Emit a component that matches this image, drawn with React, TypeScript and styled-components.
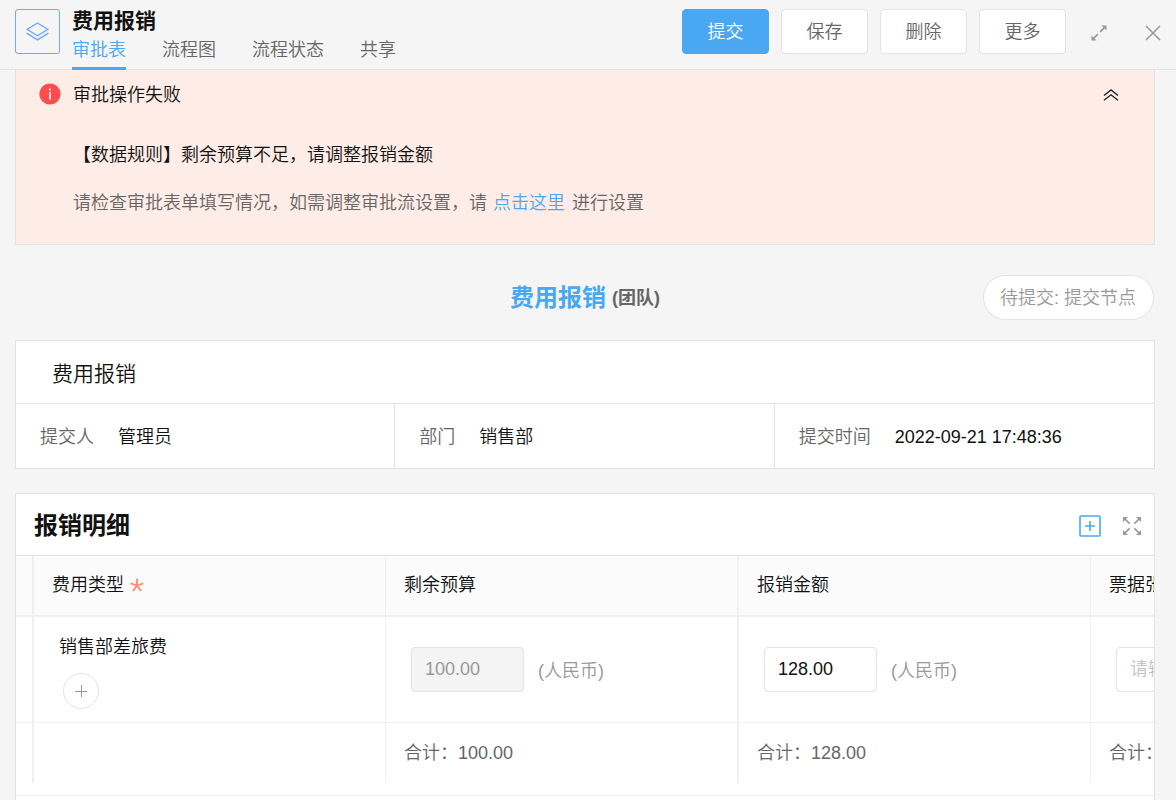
import React from "react";
import styled, { createGlobalStyle, css } from "styled-components";

const c = {
  blue: "#4aa8f2",
  bg: "#f5f5f5",
  line: "#e3e3e5",
  grid: "#f0f0f1",
  ink: "#111111",
  mid: "#666666",
  soft: "#999999",
};

const GlobalStyle = createGlobalStyle`
  *, *::before, *::after { box-sizing: border-box; }
  body {
    margin: 0;
    background: ${c.bg};
    color: ${c.ink};
    font-family: "Liberation Sans", "Noto Sans CJK SC", sans-serif;
    font-size: 18px;
    font-weight: 350;
    line-height: 24px;
  }
  h1, h2, h3, p, dl, dt, dd { margin: 0; font-size: inherit; font-weight: inherit; }
  button, input { font: inherit; color: inherit; }
  button { padding: 0; border: 0; background: none; cursor: pointer; }
  a { text-decoration: none; }
`;

const Page = styled.div`
  display: flex;
  flex-direction: column;
  height: 100vh;
`;

const Header = styled.header`
  display: flex;
  flex: none;
  height: 70px;
  padding: 9px 15px 0;
  border-bottom: 1px solid ${c.line};
`;

const AppBadge = styled.div`
  display: flex;
  align-items: center;
  justify-content: center;
  width: 45px;
  height: 45px;
  border: 1px solid #6fa8ff;
  border-radius: 3px;
  color: #6fa8ff;
`;

const Heading = styled.div`
  margin-left: 12px;
`;

const AppTitle = styled.h1`
  && { font-size: 21px; font-weight: 700; }
`;

const Tabs = styled.nav`
  display: flex;
  gap: 36px;
`;

const Tab = styled.a<{ $active?: boolean }>`
  height: 37px;
  padding-top: 5px;
  color: ${(p) => (p.$active ? c.blue : c.mid)};
  border-bottom: 3px solid ${(p) => (p.$active ? c.blue : "transparent")};
`;

const Actions = styled.div`
  display: flex;
  gap: 12px;
  margin-left: auto;
`;

const Button = styled.button<{ $primary?: boolean }>`
  width: 87px;
  height: 45px;
  border: 1px solid ${c.line};
  border-radius: 4px;
  background: #fff;
  color: ${c.mid};
  ${(p) =>
    p.$primary &&
    css`
      border-color: ${c.blue};
      background: ${c.blue};
      color: #fff;
    `}
`;

const HeaderTools = styled.div`
  display: flex;
  gap: 37px;
  height: 48px;
  margin-left: 24px;
  color: ${c.soft};
`;

const IconButton = styled.button`
  display: flex;
  align-items: center;
  color: inherit;
`;

const Main = styled.main`
  flex: 1;
  min-height: 0;
  padding: 0 21px 24px 15px;
  overflow-y: auto;
  scrollbar-width: none;
`;

const Alert = styled.section`
  display: grid;
  grid-template-columns: 22px 1fr auto;
  column-gap: 12px;
  padding: 12px 35px 29px 23px;
  border: 1px solid ${c.line};
  border-top: 0;
  background: #feece6;
`;

const AlertIcon = styled.span`
  display: flex;
  align-items: center;
  height: 24px;
`;

const AlertBody = styled.div`
  display: flex;
  flex-direction: column;
  gap: 24px;
  padding-top: 1px;
`;

const AlertTitle = styled.h2`
  padding-bottom: 12px;
`;

const AlertHint = styled.p`
  color: ${c.mid};
  a { margin: 0 2px 0 1px; color: ${c.blue}; }
`;

const Collapse = styled.button`
  display: flex;
  align-items: center;
  height: 26px;
`;

const TitleRow = styled.div`
  display: grid;
  grid-template-columns: 1fr auto 1fr;
  align-items: center;
  height: 45px;
  margin: 30px 0 20px;
`;

const FormTitle = styled.h2`
  && { grid-column: 2; font-size: 24px; font-weight: 700; }
  display: flex;
  align-items: center;
  gap: 6px;
  color: ${c.blue};
  small { font-size: 18px; color: ${c.mid}; }
`;

const Status = styled.span`
  justify-self: end;
  height: 45px;
  padding: 10px 17px 8px 16px;
  margin-right: 1px;
  border: 1px solid ${c.line};
  border-radius: 23px;
  background: #fff;
  color: ${c.soft};
`;

const Card = styled.section`
  margin-bottom: 24px;
  border: 1px solid ${c.line};
  background: #fff;
`;

const CardTitle = styled.h3`
  && { font-size: 21px; }
  padding: 21px 36px 17px;
  border-bottom: 1px solid ${c.line};
`;

const Facts = styled.dl`
  display: grid;
  grid-template-columns: repeat(3, 1fr);
`;

const Fact = styled.div`
  display: flex;
  gap: 24px;
  padding: 21px 24px 19px;
  border-right: 1px solid ${c.line};
  &:last-child { border-right: 0; }
  dt { color: ${c.mid}; }
`;

const DetailHead = styled.div`
  display: flex;
  align-items: center;
  gap: 21px;
  height: 62px;
  padding: 3px 12px 0 18px;
  border-bottom: 1px solid ${c.line};
  color: ${c.soft};
`;

const DetailTitle = styled.h3`
  && { flex: 1; font-size: 24px; font-weight: 700; }
  color: ${c.ink};
`;

const TableScroll = styled.div`
  overflow: hidden;
  padding-bottom: 12px;
  border-bottom: 1px solid ${c.grid};
`;

const Table = styled.table`
  width: 1428px;
  table-layout: fixed;
  border-collapse: separate;
  border-spacing: 0;
  th, td {
    padding: 0 18px;
    border-right: 1px solid ${c.grid};
    text-align: left;
    font-weight: inherit;
  }
  tr > :nth-child(1) { width: 18px; padding: 0; border-right-width: 2px; }
  tr > :nth-child(2), tr > :nth-child(4) { width: 352px; }
  tr > :nth-child(3) { width: 353px; border-right-width: 2px; }
  th { height: 61px; padding-bottom: 2px; border-bottom: 2px solid ${c.grid}; background: #fbfbfb; }
  tbody td { height: 106px; padding: 0 25px; border-bottom: 1px solid ${c.grid}; }
  tfoot td { height: 60px; color: ${c.mid}; }
`;

const ColumnLabel = styled.span`
  display: flex;
  align-items: center;
  gap: 6px;
`;

const TypeCell = styled.div`
  display: flex;
  flex-direction: column;
  gap: 14px;
  padding-top: 5px;
`;

const AddRound = styled.button`
  display: flex;
  align-items: center;
  justify-content: center;
  width: 36px;
  height: 36px;
  margin-left: 4px;
  border: 1px solid ${c.line};
  border-radius: 50%;
  color: ${c.soft};
`;

const Money = styled.label`
  display: flex;
  align-items: center;
  gap: 14px;
  color: ${c.soft};
`;

const Unit = styled.span`
  padding-top: 3px;
`;

const Field = styled.input`
  width: 113px;
  height: 45px;
  padding: 0 13px;
  border: 1px solid ${c.line};
  border-radius: 4px;
  background: #fff;
  color: ${c.ink};
  &:disabled { background: #f4f4f4; color: ${c.soft}; }
  &::placeholder { color: #c4c4c4; }
`;

const CardFoot = styled.div`
  height: 48px;
`;

const LayersIcon = () => (
  <svg width="23" height="19" viewBox="0 0 23 19" fill="none" stroke="currentColor" strokeWidth="1.4">
    <path d="M11.5 1 L22 7.4 L11.5 13.8 L1 7.4 Z" />
    <path d="M0.6 11.2 L11.5 17.9 L22.4 11.2" />
  </svg>
);

const ExpandIcon = () => (
  <svg width="18" height="18" viewBox="0 0 18 18" fill="none" stroke="currentColor" strokeWidth="1.7">
    <path d="M10.2 7.8 L15 3 M7.8 10.2 L3 15" />
    <path d="M11.5 1.5 H16.5 V6.5 Z M1.5 11.5 V16.5 H6.5 Z" fill="currentColor" stroke="none" />
  </svg>
);

const CloseIcon = () => (
  <svg width="16" height="16" viewBox="0 0 16 16" fill="none" stroke="currentColor" strokeWidth="1.5">
    <path d="M1 1 L15 15 M15 1 L1 15" />
  </svg>
);

const ErrorIcon = () => (
  <svg width="22" height="22" viewBox="0 0 22 22">
    <circle cx="11" cy="11" r="10.6" fill="#ff4d4f" />
    <path d="M11 9 V16.4" stroke="#fff" strokeWidth="1.6" />
    <circle cx="11" cy="6.5" r="1" fill="#fff" />
  </svg>
);

const CollapseIcon = () => (
  <svg width="16" height="12" viewBox="0 0 16 12" fill="none" stroke="#222" strokeWidth="1.4">
    <path d="M1 6.5 L8 1 L15 6.5 M1 11.3 L8 5.8 L15 11.3" />
  </svg>
);

const AddSquareIcon = () => (
  <svg width="22" height="22" viewBox="0 0 22 22" fill="none" stroke={c.blue} strokeWidth="1.6">
    <rect x="1" y="1" width="20" height="20" rx="1" />
    <path d="M11 6 V16 M6 11 H16" />
  </svg>
);

const FullscreenIcon = () => (
  <svg width="20" height="20" viewBox="0 0 20 20" fill="none" stroke="currentColor" strokeWidth="1.7">
    <path d="M7.6 7.6 L3 3 M12.4 7.6 L17 3 M7.6 12.4 L3 17 M12.4 12.4 L17 17" />
    <path
      d="M1 1 H6 L1 6 Z M19 1 V6 L14 1 Z M1 19 V14 L6 19 Z M19 19 H14 L19 14 Z"
      fill="currentColor"
      stroke="none"
    />
  </svg>
);

const RequiredIcon = () => (
  <svg width="14" height="14" viewBox="0 0 14 14" fill="none" stroke="#ff8a70" strokeWidth="1.8">
    <path d="M7 7.5 V0.8 M7 7.5 L0.6 5.4 M7 7.5 L13.4 5.4 M7 7.5 L3 13 M7 7.5 L11 13" />
  </svg>
);

const PlusIcon = () => (
  <svg width="12" height="12" viewBox="0 0 12 12" fill="none" stroke="currentColor">
    <path d="M6.5 0 V12 M0 6.5 H12" />
  </svg>
);

const tabs = ["审批表", "流程图", "流程状态", "共享"];
const actions = ["提交", "保存", "删除", "更多"];
const facts = [
  ["提交人", "管理员"],
  ["部门", "销售部"],
  ["提交时间", "2022-09-21 17:48:36"],
];

export default function App() {
  return (
    <Page lang="zh-CN">
      <GlobalStyle />
      <Header>
        <AppBadge>
          <LayersIcon />
        </AppBadge>
        <Heading>
          <AppTitle>费用报销</AppTitle>
          <Tabs>
            {tabs.map((t, i) => (
              <Tab key={t} href="#" $active={i === 0}>
                {t}
              </Tab>
            ))}
          </Tabs>
        </Heading>
        <Actions>
          {actions.map((a, i) => (
            <Button key={a} type="button" $primary={i === 0}>
              {a}
            </Button>
          ))}
        </Actions>
        <HeaderTools>
          <IconButton type="button" aria-label="展开">
            <ExpandIcon />
          </IconButton>
          <IconButton type="button" aria-label="关闭">
            <CloseIcon />
          </IconButton>
        </HeaderTools>
      </Header>
      <Main>
        <Alert role="alert">
          <AlertIcon>
            <ErrorIcon />
          </AlertIcon>
          <AlertBody>
            <AlertTitle>审批操作失败</AlertTitle>
            <p>【数据规则】剩余预算不足，请调整报销金额</p>
            <AlertHint>
              请检查审批表单填写情况，如需调整审批流设置，请 <a href="#">点击这里</a> 进行设置
            </AlertHint>
          </AlertBody>
          <Collapse type="button" aria-label="收起">
            <CollapseIcon />
          </Collapse>
        </Alert>
        <TitleRow>
          <FormTitle>
            费用报销<small>(团队)</small>
          </FormTitle>
          <Status>待提交: 提交节点</Status>
        </TitleRow>
        <Card>
          <CardTitle>费用报销</CardTitle>
          <Facts>
            {facts.map(([k, v]) => (
              <Fact key={k}>
                <dt>{k}</dt>
                <dd>{v}</dd>
              </Fact>
            ))}
          </Facts>
        </Card>
        <Card>
          <DetailHead>
            <DetailTitle>报销明细</DetailTitle>
            <IconButton type="button" aria-label="新增">
              <AddSquareIcon />
            </IconButton>
            <IconButton type="button" aria-label="全屏">
              <FullscreenIcon />
            </IconButton>
          </DetailHead>
          <TableScroll>
            <Table>
              <thead>
                <tr>
                  <th />
                  <th>
                    <ColumnLabel>
                      费用类型
                      <RequiredIcon />
                    </ColumnLabel>
                  </th>
                  <th>剩余预算</th>
                  <th>报销金额</th>
                  <th>票据张数</th>
                </tr>
              </thead>
              <tbody>
                <tr>
                  <td />
                  <td>
                    <TypeCell>
                      销售部差旅费
                      <AddRound type="button" aria-label="添加">
                        <PlusIcon />
                      </AddRound>
                    </TypeCell>
                  </td>
                  <td>
                    <Money>
                      <Field aria-label="剩余预算" defaultValue="100.00" disabled />
                      <Unit>(人民币)</Unit>
                    </Money>
                  </td>
                  <td>
                    <Money>
                      <Field aria-label="报销金额" defaultValue="128.00" />
                      <Unit>(人民币)</Unit>
                    </Money>
                  </td>
                  <td>
                    <Field aria-label="票据张数" placeholder="请输入" />
                  </td>
                </tr>
              </tbody>
              <tfoot>
                <tr>
                  <td />
                  <td />
                  <td>合计：100.00</td>
                  <td>合计：128.00</td>
                  <td>合计：0</td>
                </tr>
              </tfoot>
            </Table>
          </TableScroll>
          <CardFoot />
        </Card>
      </Main>
    </Page>
  );
}
